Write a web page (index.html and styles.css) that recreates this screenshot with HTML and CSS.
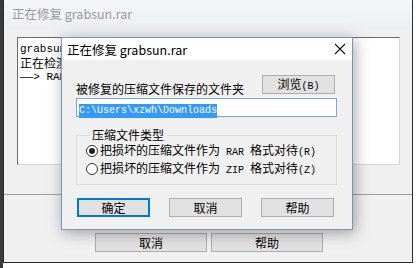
FILE: index.html
```html
<!DOCTYPE html>
<html lang="zh-CN">
<head>
    <meta charset="UTF-8">
    <title>正在修复 grabsun.rar</title>
    <link rel="stylesheet" href="styles.css">
</head>
<body>
    <div class="desk">
        <div class="win">
            <div class="win-title">正在修复 grabsun.rar</div>
            <div class="win-body">
                <div class="log">
                    <div class="mono">grabsun.rar</div>
                    <div>正在检测压缩文件</div>
                    <div class="mono">——&gt; RAR</div>
                </div>
                <div class="sep"></div>
                <div class="win-buttons">
                    <button class="btn wide">取消</button>
                    <button class="btn wide">帮助</button>
                </div>
            </div>
        </div>

        <div class="dialog">
            <div class="dlg-title">
                <span>正在修复 grabsun.rar</span>
                <svg class="close" width="12" height="12" viewBox="0 0 12 12">
                    <path d="M1 1 L11 11 M11 1 L1 11" stroke="#111" stroke-width="1.1" fill="none"/>
                </svg>
            </div>
            <div class="dlg-body">
                <div class="folder-row">
                    <label for="path">被修复的压缩文件保存的文件夹</label>
                    <button class="btn small">浏览<span class="mono">(B)</span></button>
                </div>
                <div class="path" id="path"><span class="sel">C:\Users\xzwh\Downloads</span></div>

                <fieldset class="group">
                    <legend>压缩文件类型</legend>
                    <div class="radio"><span class="dot on"></span><span>把损坏的压缩文件作为<span class="mono"> RAR </span>格式对待<span class="mono">(R)</span></span></div>
                    <div class="radio"><span class="dot"></span><span>把损坏的压缩文件作为<span class="mono"> ZIP </span>格式对待<span class="mono">(Z)</span></span></div>
                </fieldset>

                <div class="dlg-buttons">
                    <button class="btn small focus">确定</button>
                    <button class="btn small">取消</button>
                    <button class="btn small">帮助</button>
                </div>
            </div>
        </div>
    </div>
</body>
</html>
```

FILE: styles.css
```css
body {
    margin: 0;
    background: #ffffff;
    font-family: "Noto Sans CJK SC", "Noto Sans", sans-serif;
    font-size: 12px;
    color: #000;
}
.desk {
    position: relative;
    width: 419px;
    height: 268px;
    border-left: 3px solid #3a3a3a;
    box-sizing: border-box;
}
.mono {
    font-family: "Liberation Mono", "DejaVu Sans Mono", monospace;
    font-size: 10px;
    white-space: pre;
}
.win {
    width: 410px;
    height: 263px;
    border: 1px solid #2b2b2b;
    border-top: none;
    box-sizing: border-box;
    background: #f0f0f0;
    display: flex;
    flex-direction: column;
}
.win-title {
    height: 30px;
    line-height: 28px;
    padding-left: 8px;
    color: #9a9a9a;
    font-size: 12.5px;
    background: linear-gradient(#f4f6f9, #eceff3);
}
.win-body {
    flex: 1;
    display: flex;
    flex-direction: column;
}
.log {
    margin: 7px 0 0 13px;
    width: 383px;
    height: 128px;
    box-sizing: border-box;
    background: #fff;
    border: 1px solid #6b6b6b;
    border-right-color: #d6d6d6;
    border-bottom-color: #d6d6d6;
    padding: 4px 2px;
    line-height: 14px;
}
.log .mono {
    font-size: 11px;
}
.sep {
    margin-top: 29px;
    border-top: 1px solid #a0a0a0;
}
.win-buttons {
    display: flex;
    gap: 4px;
    margin: 38px 0 0 91px;
}
.btn {
    font-family: "Noto Sans CJK SC", "Noto Sans", sans-serif;
    font-size: 12px;
    height: 19px;
    padding: 0;
    line-height: 16px;
    background: #e1e1e1;
    border: 1px solid #adadad;
    color: #000;
}
.btn.wide {
    width: 112px;
}
.btn.small {
    width: 73px;
}
.btn.focus {
    border: 2px solid #0078d7;
    line-height: 14px;
}
.dialog {
    position: absolute;
    left: 58px;
    top: 37px;
    width: 292px;
    height: 193px;
    box-sizing: border-box;
    border: 1px solid #6f98c8;
    background: #f0f0f0;
    box-shadow: 2px 3px 14px rgba(0, 0, 0, 0.35);
    display: flex;
    flex-direction: column;
}
.dlg-title {
    height: 22px;
    background: #fff;
    display: flex;
    align-items: center;
    justify-content: space-between;
    padding: 0 6px 0 5px;
    font-size: 12.5px;
}
.dlg-body {
    padding: 15px 0 0 14px;
}
.folder-row {
    display: flex;
    align-items: flex-end;
    justify-content: space-between;
    width: 259px;
    height: 19px;
}
.folder-row label {
    line-height: 14px;
    margin-bottom: -2px;
}
.path {
    margin-top: 4px;
    width: 261px;
    height: 19px;
    box-sizing: border-box;
    border: 1px solid #7aa7d9;
    background: #fff;
    padding: 1px 2px;
    line-height: 15px;
}
.sel {
    background: #3399ff;
    color: #fff;
    font-family: "Liberation Mono", "DejaVu Sans Mono", monospace;
    font-size: 10px;
    display: inline-block;
    line-height: 14px;
}
.group {
    margin: 11px 0 0 0;
    padding: 0 0 6px 9px;
    width: 261px;
    box-sizing: border-box;
    border: 1px solid #dcdcdc;
    border-radius: 0;
}
.group legend {
    padding: 0 2px;
    margin-left: 4px;
    line-height: 14px;
}
.radio {
    display: flex;
    align-items: center;
    height: 18px;
    line-height: 14px;
    white-space: nowrap;
}
.dot {
    width: 12px;
    height: 12px;
    box-sizing: border-box;
    border: 1px solid #333;
    border-radius: 50%;
    background: #fff;
    margin-right: 2px;
    position: relative;
}
.dot.on::after {
    content: "";
    position: absolute;
    left: 2px;
    top: 2px;
    width: 6px;
    height: 6px;
    border-radius: 50%;
    background: #222;
}
.dlg-buttons {
    display: flex;
    gap: 19px;
    margin: 13px 0 0 1px;
}
```
